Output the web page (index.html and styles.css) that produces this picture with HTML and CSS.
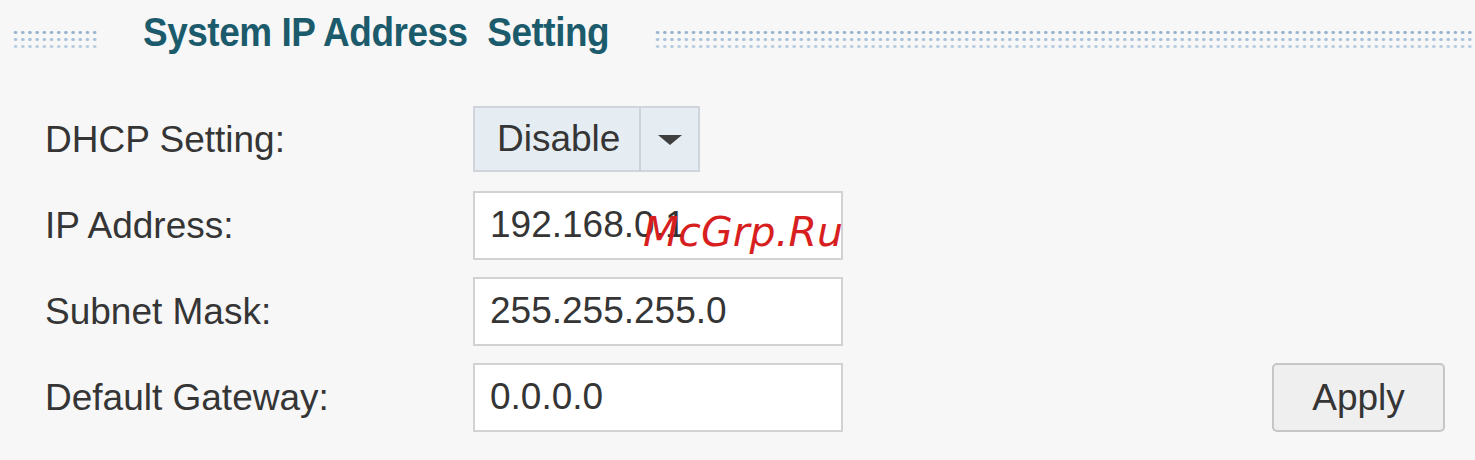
FILE: index.html
```html
<!DOCTYPE html>
<html>
<head>
<meta charset="utf-8">
<link rel="stylesheet" href="styles.css">
</head>
<body>
<div class="page">
  <div class="header">
    <div class="dots dots-left"></div>
    <div class="title-box"><h1 class="title">System IP Address&nbsp;&nbsp;Setting</h1></div>
    <div class="dots dots-right"></div>
  </div>
  <div class="form">
    <div class="label">DHCP Setting:</div>
    <div class="select">
      <span class="select-value">Disable</span>
      <span class="select-btn"><span class="arrow"></span></span>
    </div>
    <div class="spacer"></div>

    <div class="label">IP Address:</div>
    <div class="input">192.168.0.1</div>
    <div class="spacer"></div>

    <div class="label">Subnet Mask:</div>
    <div class="input">255.255.255.0</div>
    <div class="spacer"></div>

    <div class="label">Default Gateway:</div>
    <div class="input">0.0.0.0</div>
    <div class="apply-cell"><button class="apply">Apply</button></div>
  </div>
  <div class="watermark">McGrp.Ru</div>
</div>
</body>
</html>
```
FILE: styles.css
```css
html, body {
  margin: 0;
  padding: 0;
  background: #f7f7f7;
}
.page {
  position: relative;
  width: 1475px;
  height: 460px;
  overflow: hidden;
  font-family: "Liberation Sans", Arial, sans-serif;
  color: #353535;
}
.header {
  display: flex;
  align-items: flex-start;
  height: 80px;
  padding-left: 12px;
}
.dots {
  height: 21px;
  margin-top: 29px;
  background-image:
    radial-gradient(circle, #95b3cf 1.3px, rgba(149,179,207,0) 2px),
    radial-gradient(circle, #a9c2da 1.3px, rgba(169,194,218,0) 2px),
    radial-gradient(circle, #b8cde0 1.3px, rgba(184,205,224,0) 2px);
  background-size: 7.2px 7px, 7.2px 7px, 7.2px 7px;
  background-position: 0 0, 0 7px, 0 14px;
  background-repeat: repeat-x;
}
.dots-left {
  width: 86px;
}
.dots-right {
  flex: 1;
}
.title-box {
  width: 468px;
  margin: 0 43px 0 45px;
}
.title {
  display: inline-block;
  margin: 12px 0 0 0;
  font-size: 41px;
  line-height: 41px;
  font-weight: bold;
  letter-spacing: -0.5px;
  color: #1b5b6c;
  white-space: nowrap;
  transform: scaleX(0.9);
  transform-origin: left top;
}
.form {
  display: grid;
  grid-template-columns: 428px 370px 1fr;
  grid-template-rows: 68px 69px 69px 69px;
  row-gap: 17px;
  align-items: center;
  padding: 26px 30px 0 45px;
}
.label {
  font-size: 37px;
  line-height: 40px;
}
.select {
  align-self: start;
  display: flex;
  width: 227px;
  height: 66px;
  box-sizing: border-box;
  border: 2px solid #cfd5da;
  background: #e5edf3;
}
.select-value {
  width: 166px;
  box-sizing: border-box;
  padding-left: 22px;
  font-size: 37px;
  line-height: 62px;
  border-right: 2px solid #cdd3d8;
}
.select-btn {
  flex: 1;
  display: flex;
  align-items: center;
  justify-content: center;
}
.arrow {
  width: 0;
  height: 0;
  border-left: 12px solid transparent;
  border-right: 12px solid transparent;
  border-top: 10px solid #3f3f3f;
  margin-top: 2px;
}
.input {
  height: 69px;
  box-sizing: border-box;
  border: 2px solid #d2d2d2;
  background: #ffffff;
  padding-left: 15px;
  font-size: 37px;
  line-height: 64px;
}
.apply-cell {
  display: flex;
  justify-content: flex-end;
}
.apply {
  width: 173px;
  height: 69px;
  box-sizing: border-box;
  border: 2px solid #c6c6c6;
  border-radius: 5px;
  background: #efefef;
  font-family: "Liberation Sans", Arial, sans-serif;
  font-size: 37px;
  color: #353535;
  padding: 0;
}
.watermark {
  position: absolute;
  left: 643px;
  top: 209px;
  font-family: "DejaVu Sans", sans-serif;
  font-style: italic;
  font-size: 41px;
  line-height: 46px;
  color: #d71f1f;
  letter-spacing: 0;
}
```
